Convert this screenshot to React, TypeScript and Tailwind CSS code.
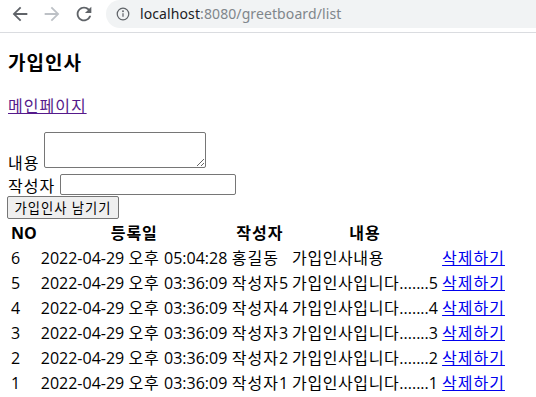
import React from 'react'

const rows = [
  { no: 6, date: '2022-04-29 오후 05:04:28', writer: '홍길동', content: '가입인사내용' },
  { no: 5, date: '2022-04-29 오후 03:36:09', writer: '작성자5', content: '가입인사입니다.......5' },
  { no: 4, date: '2022-04-29 오후 03:36:09', writer: '작성자4', content: '가입인사입니다.......4' },
  { no: 3, date: '2022-04-29 오후 03:36:09', writer: '작성자3', content: '가입인사입니다.......3' },
  { no: 2, date: '2022-04-29 오후 03:36:09', writer: '작성자2', content: '가입인사입니다.......2' },
  { no: 1, date: '2022-04-29 오후 03:36:09', writer: '작성자1', content: '가입인사입니다.......1' },
]

// Hangul runs get a little extra spacing so they take the width of the original font
const K = ({ text, tight }: { text: string; tight?: boolean }) => (
  <>
    {text.split(/([가-힣]+)/).map((part, i) =>
      /[가-힣]/.test(part) ? (
        <span key={i} className={tight ? 'tracking-[0.6px]' : 'tracking-[1px]'}>
          {part}
        </span>
      ) : (
        part
      )
    )}
  </>
)

const BrowserBar = () => (
  <div className="h-[33px] border-b border-[#dadce0] bg-white">
    <div className="flex h-[28px] items-center">
      <svg className="ml-[9px] h-[22px] w-[22px]" viewBox="0 0 24 24" fill="#5f6368">
        <path d="M20 11H7.83l5.59-5.59L12 4l-8 8 8 8 1.41-1.41L7.83 13H20v-2z" />
      </svg>
      <svg className="ml-[10px] h-[22px] w-[22px]" viewBox="0 0 24 24" fill="#bdc1c6">
        <path d="M12 4l-1.41 1.41L16.17 11H4v2h12.17l-5.58 5.59L12 20l8-8z" />
      </svg>
      <svg className="ml-[10px] h-[22px] w-[22px]" viewBox="0 0 24 24" fill="#5f6368">
        <path d="M17.65 6.35C16.2 4.9 14.21 4 12 4c-4.42 0-7.99 3.58-7.99 8s3.57 8 7.99 8c3.73 0 6.84-2.55 7.73-6h-2.08c-.82 2.33-3.04 4-5.65 4-3.31 0-6-2.69-6-6s2.69-6 6-6c1.66 0 3.14.69 4.22 1.78L13 11h7V4l-2.35 2.35z" />
      </svg>
      <div className="ml-[11px] flex h-[28px] flex-1 items-center rounded-l-full bg-[#f1f3f4]">
        <svg className="ml-[10px] h-[14px] w-[14px]" viewBox="0 0 16 16" fill="none" stroke="#5f6368" strokeWidth="1.4">
          <circle cx="8" cy="8" r="6.6" />
          <path d="M8 7v4.2" />
          <circle cx="8" cy="4.9" r="0.4" fill="#5f6368" />
        </svg>
        <span
          className="ml-[10px] text-[14px] leading-[18px] tracking-[0.1px] text-[#80868b]"
          style={{ fontFamily: '"Noto Sans", "Liberation Sans", sans-serif' }}
        >
          <span className="text-[#202124]">localhost</span>:8080/greetboard/list
        </span>
      </div>
    </div>
  </div>
)

export default function App() {
  return (
    <div className="min-h-[397px] bg-white text-black">
      <BrowserBar />
      <div
        className="px-[8px] text-[16px] leading-[21px]"
        style={{ fontFamily: '"Open Sans", "Noto Sans CJK KR", sans-serif' }}
      >
        <h3 className="mt-[18px] text-[19px] font-bold leading-[25px] tracking-[1px]">가입인사</h3>
        <a href="#" className="mt-[20px] inline-block tracking-[1px] text-[#551a8b] underline">
          메인페이지
        </a>
        <form onSubmit={(e) => e.preventDefault()}>
          <div className="mt-[15px] flex items-end">
            <span className="leading-[17px] tracking-[1px]">내용</span>
            <textarea
              rows={2}
              className="mb-[4px] ml-[5px] h-[36px] w-[162px] rounded-[2px] border border-[#767676] bg-white"
            />
          </div>
          <div className="flex h-[24px] items-end">
            <span className="leading-[19px] tracking-[1px]">작성자</span>
            <input
              type="text"
              className="mb-[1px] ml-[5px] h-[21px] w-[176px] rounded-[2px] border border-[#767676] bg-white"
            />
          </div>
          <button
            type="submit"
            className="-ml-[1px] h-[23px] w-[112px] rounded-[2px] border border-[#767676] bg-[#efefef] text-[13.3px] leading-[18px] tracking-[1px]"
          >
            가입인사 남기기
          </button>
        </form>
        <table className="mt-[1px] table-fixed border-separate border-spacing-[2px] whitespace-nowrap">
          <thead>
            <tr>
              <th className="w-[27px] p-[1px] text-center font-bold">NO</th>
              <th className="w-[189px] p-[1px] text-center font-bold">
                <K text="등록일" />
              </th>
              <th className="w-[58px] p-[1px] text-center font-bold">
                <K text="작성자" />
              </th>
              <th className="w-[148px] p-[1px] text-center font-bold">
                <K text="내용" />
              </th>
              <th className="w-[65px] p-[1px]" />
            </tr>
          </thead>
          <tbody>
            {rows.map((r) => (
              <tr key={r.no}>
                <td className="p-[1px]">{r.no}</td>
                <td className="p-[1px]">
                  <K text={r.date} />
                </td>
                <td className="p-[1px]">
                  <K text={r.writer} />
                </td>
                <td className="p-[1px]">
                  <K text={r.content} tight />
                </td>
                <td className="p-[1px]">
                  <a href="#" className="tracking-[1px] text-[#0000ee] underline">
                    삭제하기
                  </a>
                </td>
              </tr>
            ))}
          </tbody>
        </table>
      </div>
    </div>
  )
}
